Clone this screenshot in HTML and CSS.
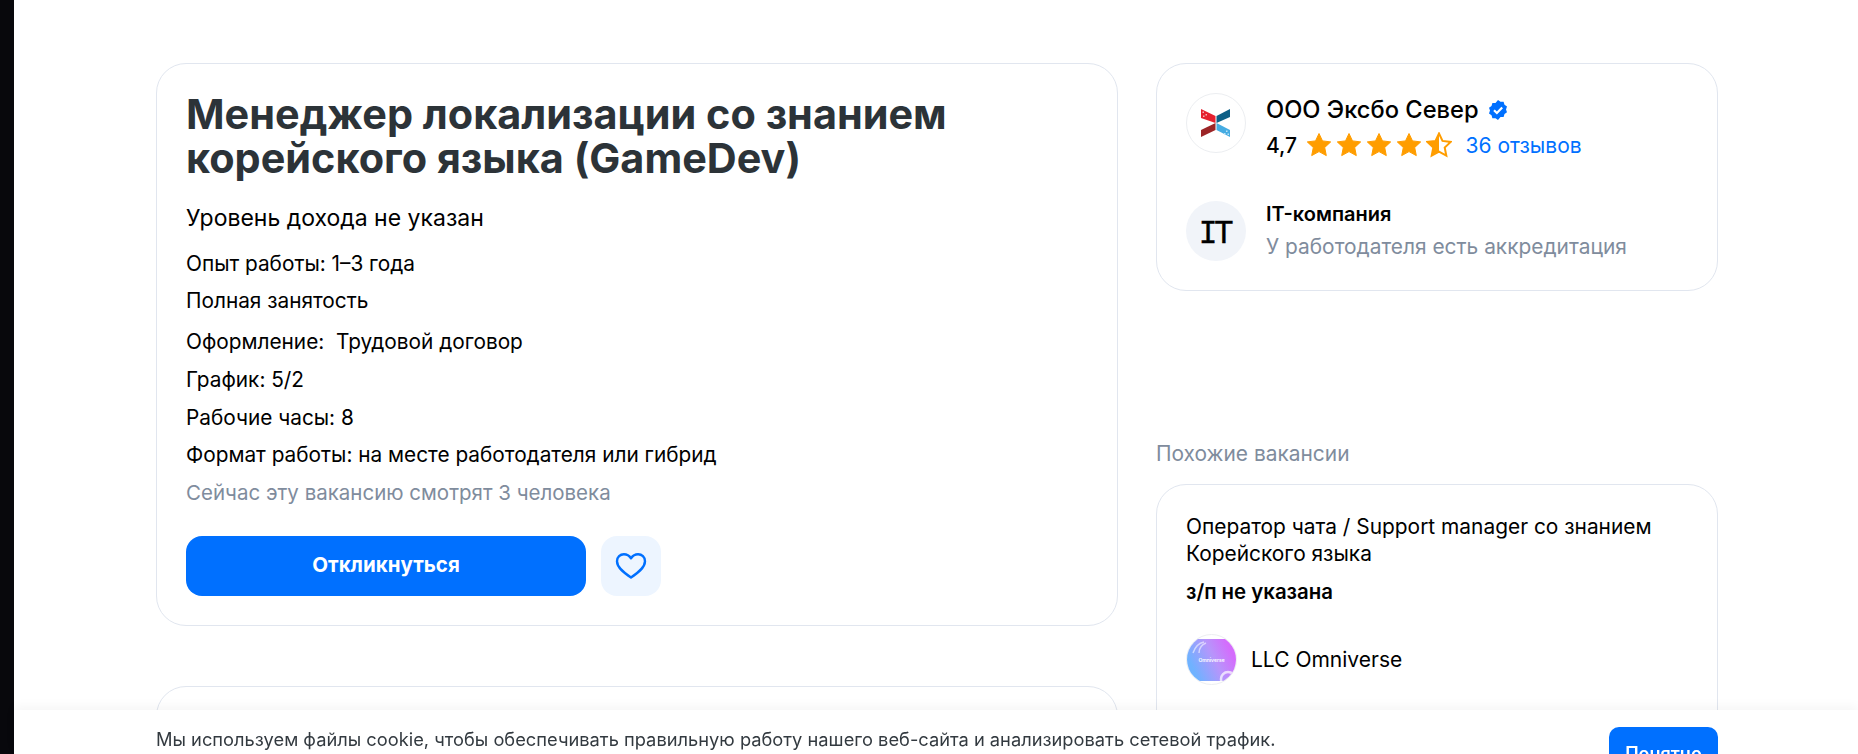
FILE: index.html
```html
<!DOCTYPE html>
<html lang="ru">
<head>
  <meta charset="UTF-8">
  <title>Менеджер локализации со знанием корейского языка (GameDev)</title>
  <meta name="viewport" content="width=device-width, initial-scale=1.0">
  <link rel="stylesheet" href="styles.css">
</head>
<body>
  <svg class="defs" width="0" height="0">
    <defs>
      <path id="star" d="M13 1.500l3.500 7.400 8.200 1-6 5.600 1.600 8.100L13 19.600l-7.300 4 1.600-8.100-6-5.600 8.200-1z"/>
      <linearGradient id="omni" x1="0" y1="0.700" x2="1" y2="0.300">
        <stop offset="0.100" stop-color="#6fb2ff"/>
        <stop offset="0.550" stop-color="#b795fb"/>
        <stop offset="0.900" stop-color="#d46cfc"/>
      </linearGradient>
    </defs>
  </svg>

  <div class="layout">
    <main class="content">
      <section class="card vacancy">
        <h1>Менеджер локализации со знанием корейского языка (GameDev)</h1>
        <p class="salary">Уровень дохода не указан</p>
        <p class="fact exp">Опыт работы: 1–3 года</p>
        <p class="fact busy">Полная занятость</p>
        <p class="fact contract">Оформление:&nbsp; Трудовой договор</p>
        <p class="fact">График: 5/2</p>
        <p class="fact">Рабочие часы: 8</p>
        <p class="fact format">Формат работы: на месте работодателя или гибрид</p>
        <p class="fact muted">Сейчас эту вакансию смотрят 3 человека</p>
        <div class="actions">
          <button class="btn-apply" type="button">Откликнуться</button>
          <button class="btn-like" type="button" aria-label="В избранное">
            <svg width="32" height="28" viewBox="0 0 32 28" fill="none" stroke="#0070ff" stroke-width="2.400" stroke-linejoin="round">
              <path d="M16 25.500C10 21.500 2 16 2 9.300 2 5 5.200 2.300 8.900 2.300c3 0 5.400 1.400 7.100 4 1.700-2.600 4.100-4 7.100-4C26.800 2.300 30 5 30 9.300 30 16 22 21.500 16 25.500z"/>
            </svg>
          </button>
        </div>
      </section>
      <section class="card description"></section>
    </main>

    <aside class="sidebar">
      <section class="card company">
        <div class="company-row">
          <div class="logo">
            <svg width="30" height="28" viewBox="0 0 30 28">
              <path d="M0 0l14.500 7v7L0 9z" fill="#e5202e"/>
              <path d="M1.500 2.500H3V4H1.500zM4.500 5H6v1.500H4.500zM2 6.500h1.500V8H2z" fill="#f6b4b8"/>
              <path d="M0 21l14.500-7v7L0 28z" fill="#9c2527"/>
              <path d="M29 0v8l-13.500 6V7z" fill="#0d5f86"/>
              <path d="M15.500 14L29 21v7l-13.500-7z" fill="#46ace2"/>
              <path d="M25 21.500h1.500V23H25zM26.500 24.500H28V26h-1.500zM23 24h1.500v1.500H23z" fill="#bfe3f6"/>
            </svg>
          </div>
          <div class="company-info">
            <div class="company-name">
              <span>ООО Эксбо Север</span>
              <svg width="20" height="20" viewBox="0 0 20 20">
                <path d="M10 0l2.500 1.800 3.100-.1.900 3 2.500 1.800-1 2.900 1 2.900-2.500 1.800-.9 3-3.100-.1L10 20l-2.500-1.800-3.100.1-.9-3L1 13.500l1-2.900-1-2.900 2.500-1.800.9-3 3.100.1z" fill="#0070ff"/>
                <path d="M6 10.200l2.900 2.800L14.200 7.600" fill="none" stroke="#fff" stroke-width="2.200"/>
              </svg>
            </div>
            <div class="rating">
              <span class="rating-value">4,7</span>
              <span class="stars">
                <svg width="26" height="26" viewBox="0 0 26 26"><use href="#star" class="star-full"/></svg>
                <svg width="26" height="26" viewBox="0 0 26 26"><use href="#star" class="star-full"/></svg>
                <svg width="26" height="26" viewBox="0 0 26 26"><use href="#star" class="star-full"/></svg>
                <svg width="26" height="26" viewBox="0 0 26 26"><use href="#star" class="star-full"/></svg>
                <svg width="26" height="26" viewBox="0 0 26 26">
                  <path d="M13 1.500v18.100l-7.300 4 1.600-8.100-6-5.600 8.200-1z" fill="#ff9d00"/>
                  <use href="#star" fill="none" stroke="#ff9d00" stroke-width="2"/>
                </svg>
              </span>
              <a class="reviews" href="#">36 отзывов</a>
            </div>
          </div>
        </div>
        <div class="company-row accredited">
          <div class="it-badge">IT</div>
          <div class="company-info">
            <div class="it-title">IT-компания</div>
            <div class="it-note">У работодателя есть аккредитация</div>
          </div>
        </div>
      </section>

      <h2 class="similar-title">Похожие вакансии</h2>
      <section class="card similar">
        <div class="similar-name">Оператор чата / Support manager со знанием Корейского языка</div>
        <div class="similar-pay">з/п не указана</div>
        <div class="similar-company">
          <div class="omni-logo">
            <span class="omni-band">
              <svg class="omni-art" width="50" height="42" viewBox="0 0 50 42">
                <rect width="50" height="42" fill="url(#omni)"/>
                <path d="M6 14C8 8 12 4 17 3M12 14c0-4 2-8 7-10" fill="none" stroke="#fff" stroke-opacity="0.550" stroke-width="1.500"/>
                <circle cx="41" cy="40" r="7" fill="none" stroke="#fff" stroke-opacity="0.700" stroke-width="2.500"/>
              </svg>
              <span class="omni-text">Omniverse</span>
            </span>
          </div>
          <span>LLC Omniverse</span>
        </div>
      </section>
    </aside>
  </div>

  <div class="cookie">
    <p>Мы используем файлы cookie, чтобы обеспечивать правильную работу нашего веб-сайта и анализировать сетевой трафик.</p>
    <button class="btn-cookie" type="button">Понятно</button>
  </div>
</body>
</html>
```

FILE: styles.css
```css
:root {
  --blue: #0070ff;
  --border: #e1e6ef;
  --muted: #7f8c9d;
  --dark: #2c3338;
}

* {
  box-sizing: border-box;
}

html, body {
  height: 100%;
  overflow: hidden;
}

body {
  margin: 0;
  background: #fff;
  color: #000;
  font-family: Inter, "Noto Sans", sans-serif;
  font-size: 20.8px;
  border-left: 14px solid #08080c;
}

p, h1, h2 {
  margin: 0;
}

.defs {
  display: block;
}

.layout {
  display: grid;
  grid-template-columns: 962px 562px;
  column-gap: 38px;
  padding: 63px 0 0 142px;
}

.card {
  background: #fff;
  border: 1.5px solid var(--border);
  border-radius: 30px;
}

/* left column */
.vacancy {
  height: 563px;
  padding: 28px 29px;
}

h1 {
  color: var(--dark);
  font-size: 41.400px;
  font-weight: 700;
  line-height: 44px;
}

.salary {
  margin-top: 22px;
  font-size: 23px;
  line-height: 32px;
}

.fact {
  margin-top: 11px;
  line-height: 27px;
}

.fact.exp {
  margin-top: 16px;
}

.fact.busy {
  margin-top: 10px;
}

.fact.contract {
  margin-top: 14px;
}

.fact.format {
  margin-top: 10px;
}

.muted {
  color: var(--muted);
  font-size: 20.500px;
}

.actions {
  display: flex;
  gap: 15px;
  margin-top: 30px;
}

.btn-apply {
  width: 400px;
  height: 60px;
  padding: 0 0 3px;
  border: 0;
  border-radius: 16px;
  background: var(--blue);
  color: #fff;
  font: 700 20.500px Inter, sans-serif;
}

.btn-like {
  display: flex;
  align-items: center;
  justify-content: center;
  width: 60px;
  height: 60px;
  border: 0;
  border-radius: 16px;
  background: #edf5ff;
}

.description {
  height: 200px;
  margin-top: 60px;
}

/* right column */
.company {
  height: 228px;
  padding: 29px 29px;
}

.company-row {
  display: flex;
  gap: 20px;
}

.accredited {
  margin-top: 39px;
}

.logo, .it-badge {
  flex: none;
  width: 60px;
  height: 60px;
  border-radius: 50%;
}

.logo {
  display: flex;
  align-items: center;
  justify-content: center;
  border: 1px solid #eceef1;
}

.it-badge {
  padding-right: 3px;
  padding-top: 1px;
  background: #f1f4f9;
  font-family: "DejaVu Sans Mono", monospace;
  font-size: 31px;
  letter-spacing: -3px;
  line-height: 60px;
  text-align: center;
  -webkit-text-stroke: 0.3px #000;
}

.company-name {
  display: flex;
  align-items: center;
  gap: 9px;
  font-size: 23.700px;
  font-weight: 500;
  line-height: 32px;
  padding-top: 1px;
}

.rating {
  display: flex;
  align-items: center;
  margin-top: 2px;
  height: 34px;
}

.rating-value {
  font-size: 21px;
  font-weight: 500;
  width: 39.500px;
}

.stars {
  display: flex;
  gap: 4px;
}

.stars svg {
  display: block;
}

.star-full {
  fill: #ff9d00;
  stroke: #ff9d00;
  stroke-width: 1;
  stroke-linejoin: round;
}

.reviews {
  margin-left: 14px;
  color: var(--blue);
  font-size: 21px;
  text-decoration: none;
}

.it-title {
  font-size: 20px;
  font-weight: 600;
  line-height: 26px;
}

.it-note {
  margin-top: 6px;
  color: var(--muted);
  font-size: 20.900px;
  line-height: 28px;
}

.similar-title {
  margin-top: 150px;
  color: var(--muted);
  font-size: 20.900px;
  font-weight: 400;
  line-height: 26px;
}

.similar {
  height: 260px;
  margin-top: 17px;
  padding: 28px 29px;
}

.similar-name {
  font-size: 20.900px;
  line-height: 27px;
}

.similar-pay {
  margin-top: 11px;
  font-size: 20.400px;
  font-weight: 600;
  line-height: 27px;
}

.similar-company {
  display: flex;
  align-items: center;
  gap: 14px;
  margin-top: 29px;
  font-size: 21px;
}

.omni-logo {
  display: flex;
  align-items: center;
  width: 51px;
  height: 51px;
  border: 1px solid #eceef1;
  border-radius: 50%;
  overflow: hidden;
}

.omni-band {
  position: relative;
  display: flex;
  align-items: center;
  justify-content: center;
  width: 100%;
  height: 42px;
}

.omni-art {
  position: absolute;
  inset: 0;
}

.omni-text {
  position: relative;
  color: #fff;
  font-size: 5px;
  font-weight: 600;
}

/* cookie bar */
.cookie {
  position: fixed;
  left: 14px;
  right: 0;
  bottom: 0;
  height: 44px;
  display: flex;
  justify-content: space-between;
  align-items: flex-start;
  padding: 17px 140px 0 142px;
  background: #fff;
  box-shadow: 0 -4px 10px rgba(0, 0, 0, 0.04);
}

.cookie p {
  color: #333a40;
  font-size: 18.300px;
  line-height: 24px;
}

.btn-cookie {
  width: 109px;
  height: 52px;
  border: 0;
  border-radius: 10px;
  background: var(--blue);
  color: #fff;
  font: 600 18px Inter, sans-serif;
}
```
